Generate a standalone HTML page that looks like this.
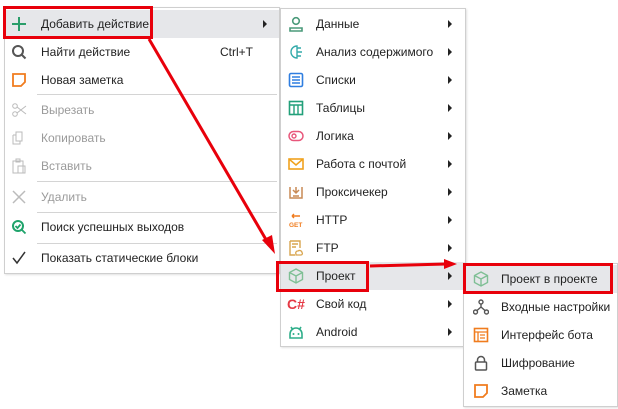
<!DOCTYPE html><html><head><meta charset="utf-8"><style>
body{margin:0;width:618px;height:409px;background:#fff;position:relative;overflow:hidden;font-family:"Liberation Sans","DejaVu Sans",sans-serif;font-size:12px;color:#222}
.m{position:absolute;background:#fff;border:1px solid #cfcfcf;box-shadow:1px 1px 2px rgba(0,0,0,.12)}
.r{position:absolute;left:0;right:0;height:28px;line-height:28px}
.r .t{position:absolute}
.hl{background:#e6e7ea}
.ar{position:absolute;width:0;height:0;border-left:4px solid #222;border-top:4px solid transparent;border-bottom:4px solid transparent;top:10px}
.sep{position:absolute;height:1px;background:#d4d4d4}
.dis{color:#9a9a9a}
.ic{position:absolute;top:6px;width:16px;height:16px}
.red{position:absolute;border:3px solid #e8000b;box-sizing:border-box}
</style></head><body>

<div class="m" style="left:4px;top:7px;width:274px;height:265px">
 <div class="r hl" style="top:2px"><svg class="ic" style="left:6px" viewBox="0 0 16 16"><path d="M8 1v14M1 8h14" stroke="#2a9d6a" stroke-width="2"/></svg><span class="t" style="left:36px">Добавить действие</span><div class="ar" style="left:258px"></div></div>
 <div class="r" style="top:30px"><svg class="ic" style="left:6px" viewBox="0 0 16 16"><circle cx="7" cy="7" r="5" fill="none" stroke="#555" stroke-width="2"/><path d="M10.5 10.5l4 4" stroke="#555" stroke-width="2"/></svg><span class="t" style="left:36px">Найти действие</span><span class="t" style="left:215px">Ctrl+T</span></div>
 <div class="r" style="top:58px"><svg class="ic" style="left:6px" viewBox="0 0 16 16"><path d="M2 2h12v8l-4 4H2z" fill="none" stroke="#f07c1e" stroke-width="1.8"/></svg><span class="t" style="left:36px">Новая заметка</span></div>
 <div class="sep" style="top:86px;left:32px;right:2px"></div>
 <div class="r dis" style="top:88px"><svg class="ic" style="left:6px" viewBox="0 0 16 16"><circle cx="4" cy="4" r="2.3" fill="none" stroke="#bbb"/><circle cx="4" cy="12" r="2.3" fill="none" stroke="#bbb"/><path d="M6 5l9 7M6 11l9-7" stroke="#bbb"/></svg><span class="t" style="left:36px">Вырезать</span></div>
 <div class="r dis" style="top:116px"><svg class="ic" style="left:6px" viewBox="0 0 16 16"><path d="M5 2h6v9H5zM2 5h3M2 5v9h7v-3" fill="none" stroke="#bbb"/></svg><span class="t" style="left:36px">Копировать</span></div>
 <div class="r dis" style="top:144px"><svg class="ic" style="left:6px" viewBox="0 0 16 16"><path d="M2 3h10v12H2zM5 1h4v3H5zM7 8h7v7H7z" fill="none" stroke="#bbb"/></svg><span class="t" style="left:36px">Вставить</span></div>
 <div class="sep" style="top:173px;left:32px;right:2px"></div>
 <div class="r dis" style="top:175px"><svg class="ic" style="left:6px" viewBox="0 0 16 16"><path d="M2 2l12 12M14 2L2 14" stroke="#bbb" stroke-width="1.5"/></svg><span class="t" style="left:36px">Удалить</span></div>
 <div class="sep" style="top:204px;left:32px;right:2px"></div>
 <div class="r" style="top:205px"><svg class="ic" style="left:6px" viewBox="0 0 16 16"><circle cx="7" cy="7" r="5" fill="none" stroke="#1fa36b" stroke-width="2"/><path d="M10.5 10.5l4 4M4.5 7l2 2 3-3.5" stroke="#1fa36b" stroke-width="1.8" fill="none"/></svg><span class="t" style="left:36px">Поиск успешных выходов</span></div>
 <div class="sep" style="top:235px;left:32px;right:2px"></div>
 <div class="r" style="top:236px"><svg class="ic" style="left:6px" viewBox="0 0 16 16"><path d="M2 8l4 5 8-11" stroke="#333" stroke-width="1.5" fill="none"/></svg><span class="t" style="left:36px">Показать статические блоки</span></div>
</div>

<div class="m" style="left:280px;top:8px;width:184px;height:337px">
 <div class="r" style="top:1px"><svg class="ic" style="left:7px" viewBox="0 0 16 16"><circle cx="8" cy="5" r="3.3" fill="none" stroke="#4a9a7a" stroke-width="1.6"/><path d="M2 15v-3h12v3z" fill="none" stroke="#4a9a7a" stroke-width="1.6"/></svg><span class="t" style="left:35px">Данные</span><div class="ar" style="left:167px"></div></div>
 <div class="r" style="top:29px"><svg class="ic" style="left:7px" viewBox="0 0 16 16"><path d="M9 2a6 6 0 100 12V2zM9 4h4M9 8h5M9 12h4" fill="none" stroke="#3aa" stroke-width="1.4"/></svg><span class="t" style="left:35px">Анализ содержимого</span><div class="ar" style="left:167px"></div></div>
 <div class="r" style="top:57px"><svg class="ic" style="left:7px" viewBox="0 0 16 16"><rect x="1.5" y="1.5" width="13" height="13" rx="1.5" fill="none" stroke="#2f7ee0" stroke-width="1.6"/><path d="M4 5h8M4 8h8M4 11h8" stroke="#2f7ee0" stroke-width="1.4"/></svg><span class="t" style="left:35px">Списки</span><div class="ar" style="left:167px"></div></div>
 <div class="r" style="top:85px"><svg class="ic" style="left:7px" viewBox="0 0 16 16"><rect x="1.5" y="1.5" width="13" height="13" fill="none" stroke="#22a07a" stroke-width="1.6"/><path d="M1.5 5h13M6 5v9.5M10 5v9.5" stroke="#22a07a" stroke-width="1.4"/></svg><span class="t" style="left:35px">Таблицы</span><div class="ar" style="left:167px"></div></div>
 <div class="r" style="top:113px"><svg class="ic" style="left:7px" viewBox="0 0 16 16"><rect x="1" y="3.5" width="14" height="9" rx="4.5" fill="none" stroke="#e8577b" stroke-width="1.5"/><circle cx="6" cy="8" r="2" fill="none" stroke="#e8577b" stroke-width="1.4"/></svg><span class="t" style="left:35px">Логика</span><div class="ar" style="left:167px"></div></div>
 <div class="r" style="top:141px"><svg class="ic" style="left:7px" viewBox="0 0 16 16"><rect x="1" y="3" width="14" height="10" fill="none" stroke="#f0a21e" stroke-width="1.6"/><path d="M1 3l7 6 7-6" fill="none" stroke="#f0a21e" stroke-width="1.5"/></svg><span class="t" style="left:35px">Работа с почтой</span><div class="ar" style="left:167px"></div></div>
 <div class="r" style="top:169px"><svg class="ic" style="left:7px" viewBox="0 0 16 16"><path d="M2 3v11h12V3M8 3v6M5 6l3 3 3-3M5 12h6" fill="none" stroke="#c88a55" stroke-width="1.5"/></svg><span class="t" style="left:35px">Проксичекер</span><div class="ar" style="left:167px"></div></div>
 <div class="r" style="top:197px"><svg class="ic" style="left:7px" viewBox="0 0 16 16"><path d="M4 4h8M4 4l2-2M4 4l2 2" stroke="#f07c1e" stroke-width="1.4" fill="none"/><text x="1" y="15" font-size="6.5" font-weight="bold" fill="#f07c1e" font-family="Liberation Sans">GET</text></svg><span class="t" style="left:35px">HTTP</span><div class="ar" style="left:167px"></div></div>
 <div class="r" style="top:225px"><svg class="ic" style="left:7px" viewBox="0 0 16 16"><path d="M2 1h10v7M2 1v14h5M4 4h6M4 7h4" fill="none" stroke="#d9a650" stroke-width="1.4"/><path d="M8 14a2 2 0 012-3 2.5 2.5 0 014 1.5 1.5 1.5 0 01-1 2.5H8z" fill="none" stroke="#d9a650" stroke-width="1.3"/></svg><span class="t" style="left:35px">FTP</span><div class="ar" style="left:167px"></div></div>
 <div class="r hl" style="top:253px"><svg class="ic" style="left:7px" viewBox="0 0 16 16"><path d="M8 1l6.5 3.5v7L8 15l-6.5-3.5v-7zM1.5 4.5L8 8l6.5-3.5M8 8v7" fill="none" stroke="#7fbf95" stroke-width="1.4"/></svg><span class="t" style="left:35px">Проект</span><div class="ar" style="left:167px"></div></div>
 <div class="r" style="top:281px"><span class="t" style="left:6px;color:#e53945;font-weight:bold;font-size:14px">C#</span><span class="t" style="left:35px">Свой код</span><div class="ar" style="left:167px"></div></div>
 <div class="r" style="top:309px"><svg class="ic" style="left:7px" viewBox="0 0 16 16"><path d="M2 14v-4a6 6 0 0112 0v4zM3 3l2 3M13 3l-2 3" fill="none" stroke="#2fae8a" stroke-width="1.6"/><circle cx="5.5" cy="10" r="1" fill="#2fae8a"/><circle cx="10.5" cy="10" r="1" fill="#2fae8a"/></svg><span class="t" style="left:35px">Android</span><div class="ar" style="left:167px"></div></div>
</div>

<div class="m" style="left:463px;top:263px;width:153px;height:142px">
 <div class="r hl" style="top:1px"><svg class="ic" style="left:9px" viewBox="0 0 16 16"><path d="M8 1l6.5 3.5v7L8 15l-6.5-3.5v-7zM1.5 4.5L8 8l6.5-3.5M8 8v7" fill="none" stroke="#7fbf95" stroke-width="1.4"/></svg><span class="t" style="left:37px">Проект в проекте</span></div>
 <div class="r" style="top:29px"><svg class="ic" style="left:9px" viewBox="0 0 16 16"><circle cx="8" cy="3" r="2" fill="none" stroke="#555" stroke-width="1.4"/><circle cx="2.5" cy="13" r="2" fill="none" stroke="#555" stroke-width="1.4"/><circle cx="13.5" cy="13" r="2" fill="none" stroke="#555" stroke-width="1.4"/><path d="M8 5v3M4 11.5L8 8l4 3.5" fill="none" stroke="#555" stroke-width="1.4"/></svg><span class="t" style="left:37px">Входные настройки</span></div>
 <div class="r" style="top:57px"><svg class="ic" style="left:9px" viewBox="0 0 16 16"><rect x="1.5" y="1.5" width="13" height="13" fill="none" stroke="#f07c1e" stroke-width="1.6"/><path d="M1.5 5h13M5 5v9.5M7 8h5M7 11h5" stroke="#f07c1e" stroke-width="1.3"/></svg><span class="t" style="left:37px">Интерфейс бота</span></div>
 <div class="r" style="top:85px"><svg class="ic" style="left:9px" viewBox="0 0 16 16"><path d="M4.5 7V5a3.5 3.5 0 017 0v2" fill="none" stroke="#555" stroke-width="1.5"/><rect x="2.5" y="7" width="11" height="8" rx="1" fill="none" stroke="#555" stroke-width="1.5"/></svg><span class="t" style="left:37px">Шифрование</span></div>
 <div class="r" style="top:113px"><svg class="ic" style="left:9px" viewBox="0 0 16 16"><path d="M2 2h12v8l-4 4H2z" fill="none" stroke="#f07c1e" stroke-width="1.8"/></svg><span class="t" style="left:37px">Заметка</span></div>
</div>

<div class="red" style="left:3px;top:6px;width:150px;height:33px"></div>
<div class="red" style="left:276px;top:261px;width:93px;height:31px"></div>
<div class="red" style="left:463px;top:263px;width:150px;height:31px"></div>

<svg style="position:absolute;left:0;top:0" width="618" height="409">
 <path d="M149 39L268 243" stroke="#e8000b" stroke-width="3"/>
 <path d="M275 254L262 240L272 235z" fill="#e8000b"/>
 <path d="M370 266L446 264" stroke="#e8000b" stroke-width="3"/>
 <path d="M457 264L444 259L444 269z" fill="#e8000b"/>
</svg>
</body></html>
